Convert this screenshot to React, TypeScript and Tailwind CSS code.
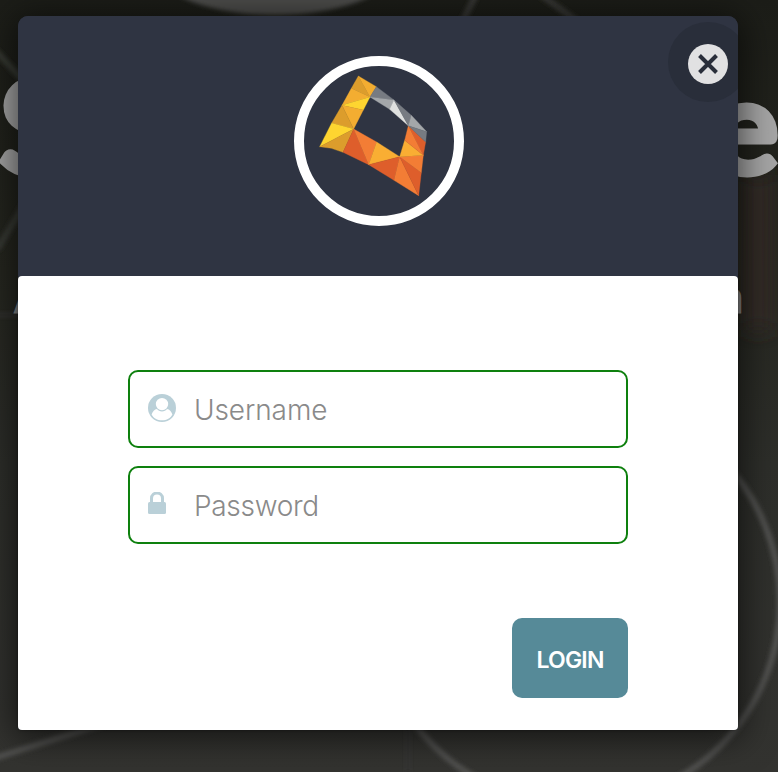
import React from "react";

const facets: [string, string][] = [
  ["223,90 202,127 258,153", "#dc9d2c"],
  ["223,90 277,122 258,153", "#f3ad31"],
  ["202,127 258,153 174,178", "#f3ad31"],
  ["258,153 174,178 238,192", "#fed530"],
  ["174,178 238,192 209,249", "#f3ad31"],
  ["174,178 143,231 209,249", "#dc9d2c"],
  ["143,231 209,249 107,302", "#fed530"],
  ["209,249 107,302 142,307 177,319", "#dc9d2c"],
  ["209,249 177,319 254,356", "#de5e2b"],
  ["209,249 278,288 254,356", "#f37d35"],
  ["278,288 347,332 254,356", "#f9ae33"],
  ["254,356 347,332 330,403", "#de5e2b"],
  ["347,332 330,403 404,449", "#f37d35"],
  ["347,332 412,380 404,449", "#de5e2b"],
  ["347,332 418,328 412,380", "#f37d35"],
  ["362,283 418,328 347,332", "#f9ae33"],
  ["373,239 425,288 418,328", "#de5e2b"],
  ["373,239 418,328 362,283", "#f37d35"],
  ["277,122 258,153 330,162", "#777b82"],
  ["258,153 330,162 317,190", "#a4a7aa"],
  ["330,162 317,190 373,239", "#dfe0df"],
  ["330,162 382,208 373,239", "#777b82"],
  ["382,208 428,257 373,239", "#a4a7aa"],
  ["373,239 428,257 425,288", "#777b82"],
];

function Logo() {
  return (
    <svg viewBox="30 30 510 510" className="size-[170px]" aria-hidden="true">
      <circle cx="285" cy="285" r="240" fill="none" stroke="#fff" strokeWidth="30" />
      {facets.map(([points, fill], i) => (
        <polygon key={i} points={points} fill={fill} stroke={fill} strokeWidth="1" strokeLinejoin="round" />
      ))}
    </svg>
  );
}

function Backdrop() {
  return (
    <div className="absolute inset-0 overflow-hidden bg-[linear-gradient(180deg,#1c1d18_0%,#25261f_35%,#2d2e2a_60%,#333330_100%)]">
      <svg className="absolute inset-0" width="778" height="772" fill="none" aria-hidden="true">
        <defs>
          <filter id="soft" x="-30%" y="-30%" width="160%" height="160%">
            <feGaussianBlur stdDeviation="2" />
          </filter>
          <filter id="haze" x="-100%" y="-50%" width="300%" height="200%">
            <feGaussianBlur stdDeviation="10" />
          </filter>
        </defs>
        <rect x="746" y="175" width="24" height="155" fill="#352a27" filter="url(#haze)" />
        <ellipse cx="275" cy="-28" rx="115" ry="43" fill="#4e4e4c" filter="url(#soft)" />
        <g stroke="#51514f" strokeWidth="6" filter="url(#soft)">
          <circle cx="577" cy="602" r="203" />
          <path d="M-5 758 Q45 742 110 722" />
          <path d="M-5 50 L30 88M-3 250 L28 198" stroke="#393a35" />
          <path d="M476 -5 L462 22M540 -6 L578 22" stroke="#393936" />
          <path d="M408 728 V772M-5 315 H30" stroke="#363634" strokeWidth="3" />
        </g>
      </svg>
      <div className="absolute left-0 top-[44px] flex w-[778px] justify-between font-['Lato'] text-[126px] font-normal leading-[160px] text-[#a5a5a5] [-webkit-text-stroke:9px_#a5a5a5] [stroke-linejoin:round]">
        <span>S</span>
        <span>e</span>
      </div>
      <div className="absolute left-[13px] top-[269px] flex w-[731px] justify-between font-['Inter'] text-[44px] leading-[56px] text-[#8a8a8a] [-webkit-text-stroke:1px_#8a8a8a] [stroke-linejoin:round]">
        <span>A</span>
        <span>n</span>
      </div>
    </div>
  );
}

function UserIcon() {
  return (
    <svg viewBox="0 0 28 28" className="size-7" aria-hidden="true">
      <circle cx="14" cy="14" r="14" fill="#bad0d8" />
      <path d="M3.6 20.5C4.6 17.5 6.5 15.2 9 15C10.8 18.2 17.2 18.2 19 15C21.5 15.2 23.4 17.5 24.4 20.5C22.5 24.2 18.8 26.3 14 26.3C9.2 26.3 5.5 24.2 3.6 20.5Z" fill="#fff" />
      <circle cx="14" cy="10.1" r="6.2" fill="#fff" />
    </svg>
  );
}

function LockIcon() {
  return (
    <svg viewBox="0 0 18 22" className="h-[22px] w-[18px]" aria-hidden="true">
      <path d="M3.5 11V6.5C3.5 -.7 14.5 -.7 14.5 6.5V11" fill="none" stroke="#bad0d8" strokeWidth="3" />
      <rect y="10" width="18" height="12" rx="1.5" fill="#bad0d8" />
    </svg>
  );
}

type FieldProps = { icon: React.ReactNode; label: string; type: string; textClass: string; iconClass: string };

function Field({ icon, label, type, textClass, iconClass }: FieldProps) {
  return (
    <label className="flex h-[78px] items-center rounded-[10px] border-2 border-[#0e800e] bg-white pl-[18px]">
      <span className={`w-[46px] shrink-0 ${iconClass}`}>{icon}</span>
      <input
        type={type}
        placeholder={label}
        className={`h-full min-w-0 flex-1 bg-transparent pt-[2px] font-['Inter'] text-[28px] font-light text-[#555] outline-none placeholder:text-[#8a8a8a] placeholder:opacity-100 ${textClass}`}
      />
    </label>
  );
}

export default function App() {
  return (
    <div className="relative h-[772px] w-[778px] overflow-hidden font-['Inter',sans-serif]">
      <Backdrop />
      <main className="relative ml-[18px] mt-4 h-[714px] w-[720px] rounded-t-[10px] rounded-b-[4px] bg-[#2f3442] shadow-[0_4px_34px_4px_rgba(0,0,0,0.6)]">
        <header className="relative flex h-[260px] justify-center overflow-hidden rounded-t-[10px] bg-[#2f3442] pl-[2px] pt-10">
          <Logo />
          <button aria-label="Close" className="absolute left-[650px] top-[6px] flex size-20 items-center justify-center rounded-full bg-[#292e3a] pt-1">
            <svg viewBox="0 0 40 40" className="size-10" aria-hidden="true">
              <circle cx="20" cy="20" r="20" fill="#e1e1e2" />
              <path d="M11.5 11.5L28.5 28.5M28.5 11.5L11.5 28.5" stroke="#292e3a" strokeWidth="4" />
            </svg>
          </button>
        </header>
        <form className="flex h-[454px] flex-col rounded-[4px] bg-white px-[110px] pt-[94px] shadow-[0_0_3px_rgba(0,0,0,0.4)]">
          <div className="flex flex-col gap-[18px]">
            <Field icon={<UserIcon />} label="Username" type="text" textClass="tracking-[-0.1px]" iconClass="mb-[2px]" />
            <Field icon={<LockIcon />} label="Password" type="password" textClass="tracking-[-0.3px]" iconClass="mb-1" />
          </div>
          <button type="button" className="mt-[74px] flex h-20 w-[116px] items-center justify-center self-end rounded-[10px] bg-[#568a98] pt-1 text-[23px] font-semibold tracking-[-0.8px] text-white">
            LOGIN
          </button>
        </form>
      </main>
    </div>
  );
}
